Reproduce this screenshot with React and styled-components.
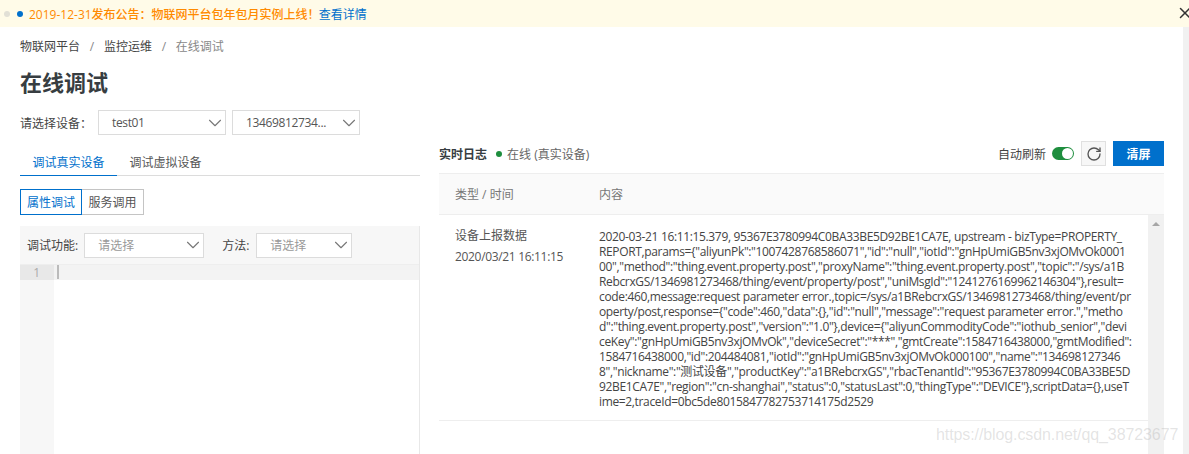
import React from 'react';
import styled, { createGlobalStyle } from 'styled-components';
import { ChevronDown, RotateCw, X } from 'lucide-react';

const GlobalStyle = createGlobalStyle`
  html, body {
    margin: 0;
    height: 100%;
    overflow: hidden;
    background: #fff;
  }
  body {
    font-family: "Open Sans", "Noto Sans CJK SC", sans-serif;
    font-size: 12px;
    color: #333;
  }
`;

const Page = styled.div`
  position: relative;
  width: 1189px;
  height: 454px;
  overflow: hidden;
`;

const Notice = styled.div`
  height: 27px;
  background: #fffbe8;
  display: flex;
  align-items: center;
  padding-left: 4px;
  white-space: nowrap;
  position: relative;
`;

const Dot = styled.span`
  width: 6px;
  height: 6px;
  border-radius: 50%;
  margin-right: 7px;
  background: ${(p) => (p.$active ? '#0070cc' : '#e2e0d6')};
`;

const NoticeText = styled.span`
  color: #ff8a00;
  margin-left: -1px;
  font-weight: 500;
`;

const NoticeLink = styled.span`
  color: #0070cc;
  margin-left: -1px;
`;

const Close = styled(X)`
  position: absolute;
  right: -5px;
  top: 4px;
  color: #333;
`;

const Body = styled.div`
  display: flex;
  height: 427px;
`;

const Content = styled.div`
  flex: 1;
  padding: 0 19px 0 20px;
`;

const Gutter = styled.div`
  width: 6px;
  background: #f1f1f1;
`;

const Breadcrumb = styled.div`
  height: 37px;
  display: flex;
  align-items: center;
  padding-top: 1px;
  box-sizing: border-box;
  color: #555;
`;

const Crumb = styled.span`
  color: ${(p) => (p.$current ? '#888' : '#444')};
`;

const Slash = styled.span`
  color: #888;
  margin: 0 9.75px;
`;

const Title = styled.h1`
  margin: 0;
  font-size: 22px;
  line-height: 36px;
  height: 46px;
  font-weight: 700;
  color: #373d41;
`;

const DeviceRow = styled.div`
  display: flex;
  align-items: center;
  height: 25px;
`;

const DeviceLabel = styled.span`
  width: 78px;
  color: #444;
`;

const Select = styled.div`
  box-sizing: border-box;
  width: ${(p) => p.$w}px;
  height: 25px;
  margin-right: ${(p) => p.$gap || 0}px;
  border: 1px solid #dcdcdc;
  background: #fff;
  display: flex;
  align-items: center;
  justify-content: space-between;
  padding: 0 0 0 13px;
  color: ${(p) => (p.$placeholder ? '#999' : '#555')};
  letter-spacing: ${(p) => (p.$placeholder ? 0 : '-0.35px')};
  white-space: nowrap;
  svg {
    color: #777;
    flex: none;
    margin-right: -1px;
  }
`;

const Columns = styled.div`
  display: flex;
  justify-content: space-between;
  margin-top: 5px;
`;

const LeftColumn = styled.div`
  width: 400px;
`;

const RightColumn = styled.div`
  width: 725px;
`;

const Tabs = styled.div`
  display: flex;
  height: 35px;
  border-bottom: 1px solid #dcdcdc;
`;

const Tab = styled.div`
  width: ${(p) => p.$w}px;
  box-sizing: border-box;
  text-align: center;
  padding-top: 14px;
  line-height: 17px;
  color: ${(p) => (p.$active ? '#0070cc' : '#555')};
  border-bottom: ${(p) => (p.$active ? '1px solid #0070cc' : 'none')};
  height: 36px;
`;

const ButtonGroup = styled.div`
  display: flex;
  margin-top: 13px;
`;

const GroupButton = styled.div`
  box-sizing: border-box;
  height: 26px;
  width: ${(p) => p.$w}px;
  margin-left: ${(p) => (p.$active ? 0 : -1)}px;
  display: flex;
  align-items: center;
  justify-content: center;
  border: 1px solid ${(p) => (p.$active ? '#0070cc' : '#c4c4c4')};
  color: ${(p) => (p.$active ? '#0070cc' : '#555')};
  position: relative;
  z-index: ${(p) => (p.$active ? 1 : 0)};
`;

const Editor = styled.div`
  margin-top: 11px;
  height: 228px;
  background: #fff;
  border-right: 1px solid #e8e8e8;
`;

const EditorBar = styled.div`
  box-sizing: border-box;
  height: 39px;
  background: #f7f7f7;
  border-bottom: 1px solid #eee;
  display: flex;
  align-items: center;
  padding-left: 7px;
  color: #444;
`;

const BarLabel = styled.span`
  margin-right: ${(p) => p.$gap}px;
  white-space: nowrap;
`;

const EditorBody = styled.div`
  display: flex;
  height: 189px;
`;

const LineNumbers = styled.div`
  width: 34px;
  background: #f7f7f7;
`;

const LineNumber = styled.div`
  height: 15px;
  line-height: 15px;
  background: #e8e8e8;
  color: #aaa;
  text-align: right;
  padding-right: 14px;
  box-sizing: border-box;
`;

const CodeArea = styled.div`
  flex: 1;
`;

const ActiveLine = styled.div`
  height: 15px;
  background: #f3f3f3;
  padding-left: 3px;
  &::before {
    content: '';
    display: block;
    width: 2px;
    height: 14px;
    background: #bbb;
  }
`;

const LogHeader = styled.div`
  display: flex;
  align-items: center;
  height: 27px;
  margin-bottom: 6px;
`;

const LogTitle = styled.span`
  font-weight: 600;
  color: #373d41;
`;

const StatusDot = styled.span`
  width: 6px;
  height: 6px;
  border-radius: 50%;
  background: #1e8e3e;
  margin: 0 5px 0 9px;
`;

const StatusText = styled.span`
  color: #666;
`;

const HeaderActions = styled.div`
  margin-left: auto;
  display: flex;
  align-items: center;
`;

const AutoLabel = styled.span`
  color: #444;
  margin-right: 6px;
`;

const Switch = styled.span`
  width: 22px;
  height: 13px;
  border-radius: 7px;
  background: #1e8e3e;
  position: relative;
  margin-right: 7px;
  &::after {
    content: '';
    position: absolute;
    right: 1px;
    top: 1px;
    width: 11px;
    height: 11px;
    border-radius: 50%;
    background: #fff;
  }
`;

const IconButton = styled.div`
  box-sizing: border-box;
  width: 25px;
  height: 25px;
  border: 1px solid #e0e0e0;
  background: #f7f7f7;
  display: flex;
  align-items: center;
  justify-content: center;
  color: #555;
  margin-right: 7px;
`;

const PrimaryButton = styled.div`
  width: 51px;
  height: 25px;
  background: #0070cc;
  color: #fff;
  font-weight: 600;
  display: flex;
  align-items: center;
  justify-content: center;
`;

const TableHead = styled.div`
  box-sizing: border-box;
  height: 42px;
  background: #fafafa;
  border-top: 1px solid #eee;
  border-bottom: 1px solid #eee;
  display: flex;
  align-items: center;
  color: #777;
`;

const TypeCell = styled.div`
  width: 160px;
  padding-left: 16px;
  box-sizing: border-box;
  flex: none;
`;

const TableBody = styled.div`
  display: flex;
  height: 240px;
`;

const RowArea = styled.div`
  flex: 1;
`;

const Row = styled.div`
  display: flex;
  height: 206px;
  box-sizing: border-box;
  border-bottom: 1px solid #eee;
  padding-top: 14px;
`;

const TypeText = styled.div`
  color: #555;
  line-height: 14px;
  margin-bottom: 7px;
  white-space: nowrap;
`;

const DateText = styled(TypeText)`
  letter-spacing: -0.33px;
`;

const LogLines = styled.div`
  color: #444;
  line-height: 15px;
`;

const LogLine = styled.div`
  white-space: nowrap;
  letter-spacing: -0.35px;
`;

const Scrollbar = styled.div`
  width: 16px;
  background: #f1f1f1;
  position: relative;
  &::before {
    content: '';
    position: absolute;
    left: 4px;
    top: 7px;
    border-left: 4px solid transparent;
    border-right: 4px solid transparent;
    border-bottom: 4px solid #a6a6a6;
  }
`;

const Watermark = styled.div`
  position: absolute;
  left: 936px;
  top: 425px;
  font-family: "Liberation Sans", sans-serif;
  font-size: 16px;
  letter-spacing: -0.1px;
  line-height: 20px;
  color: rgba(170, 170, 170, 0.32);
  white-space: nowrap;
`;

const logLines = [
  '2020-03-21 16:11:15.379, 95367E3780994C0BA33BE5D92BE1CA7E, upstream - bizType=PROPERTY_',
  'REPORT,params={"aliyunPk":"1007428768586071","id":"null","iotId":"gnHpUmiGB5nv3xjOMvOk0001',
  '00","method":"thing.event.property.post","proxyName":"thing.event.property.post","topic":"/sys/a1B',
  'RebcrxGS/1346981273468/thing/event/property/post","uniMsgId":"1241276169962146304"},result=',
  'code:460,message:request parameter error.,topic=/sys/a1BRebcrxGS/1346981273468/thing/event/pr',
  'operty/post,response={"code":460,"data":{},"id":"null","message":"request parameter error.","metho',
  'd":"thing.event.property.post","version":"1.0"},device={"aliyunCommodityCode":"iothub_senior","devi',
  'ceKey":"gnHpUmiGB5nv3xjOMvOk","deviceSecret":"***","gmtCreate":1584716438000,"gmtModified":',
  '1584716438000,"id":204484081,"iotId":"gnHpUmiGB5nv3xjOMvOk000100","name":"134698127346',
  '8","nickname":"测试设备","productKey":"a1BRebcrxGS","rbacTenantId":"95367E3780994C0BA33BE5D',
  '92BE1CA7E","region":"cn-shanghai","status":0,"statusLast":0,"thingType":"DEVICE"},scriptData={},useT',
  'ime=2,traceId=0bc5de8015847782753714175d2529',
];

export default function App() {
  return (
    <Page>
      <GlobalStyle />
      <Notice>
        <Dot />
        <Dot $active />
        <NoticeText>2019-12-31发布公告：物联网平台包年包月实例上线！</NoticeText>
        <NoticeLink>查看详情</NoticeLink>
        <Close size={18} strokeWidth={2} />
      </Notice>
      <Body>
        <Content>
          <Breadcrumb>
            <Crumb>物联网平台</Crumb>
            <Slash>/</Slash>
            <Crumb>监控运维</Crumb>
            <Slash>/</Slash>
            <Crumb $current>在线调试</Crumb>
          </Breadcrumb>
          <Title>在线调试</Title>
          <DeviceRow>
            <DeviceLabel>请选择设备：</DeviceLabel>
            <Select $w={128} $gap={6}>
              test01
              <ChevronDown size={22} strokeWidth={1.2} />
            </Select>
            <Select $w={128}>
              13469812734...
              <ChevronDown size={22} strokeWidth={1.2} />
            </Select>
          </DeviceRow>
          <Columns>
            <LeftColumn>
              <Tabs>
                <Tab $active $w={97}>调试真实设备</Tab>
                <Tab $w={97}>调试虚拟设备</Tab>
              </Tabs>
              <ButtonGroup>
                <GroupButton $active $w={62}>属性调试</GroupButton>
                <GroupButton $w={63}>服务调用</GroupButton>
              </ButtonGroup>
              <Editor>
                <EditorBar>
                  <BarLabel $gap={6}>调试功能:</BarLabel>
                  <Select $w={120} $gap={18} $placeholder>
                    请选择
                    <ChevronDown size={22} strokeWidth={1.2} />
                  </Select>
                  <BarLabel $gap={7}>方法:</BarLabel>
                  <Select $w={96} $placeholder>
                    请选择
                    <ChevronDown size={22} strokeWidth={1.2} />
                  </Select>
                </EditorBar>
                <EditorBody>
                  <LineNumbers>
                    <LineNumber>1</LineNumber>
                  </LineNumbers>
                  <CodeArea>
                    <ActiveLine />
                  </CodeArea>
                </EditorBody>
              </Editor>
            </LeftColumn>
            <RightColumn>
              <LogHeader>
                <LogTitle>实时日志</LogTitle>
                <StatusDot />
                <StatusText>在线 (真实设备)</StatusText>
                <HeaderActions>
                  <AutoLabel>自动刷新</AutoLabel>
                  <Switch />
                  <IconButton>
                    <RotateCw size={16} strokeWidth={2} />
                  </IconButton>
                  <PrimaryButton>清屏</PrimaryButton>
                </HeaderActions>
              </LogHeader>
              <TableHead>
                <TypeCell>类型 / 时间</TypeCell>
                <div>内容</div>
              </TableHead>
              <TableBody>
                <RowArea>
                  <Row>
                    <TypeCell>
                      <TypeText>设备上报数据</TypeText>
                      <DateText>2020/03/21 16:11:15</DateText>
                    </TypeCell>
                    <LogLines>
                      {logLines.map((line) => (
                        <LogLine key={line}>{line}</LogLine>
                      ))}
                    </LogLines>
                  </Row>
                </RowArea>
                <Scrollbar />
              </TableBody>
            </RightColumn>
          </Columns>
        </Content>
        <Gutter />
      </Body>
      <Watermark>https://blog.csdn.net/qq_38723677</Watermark>
    </Page>
  );
}
